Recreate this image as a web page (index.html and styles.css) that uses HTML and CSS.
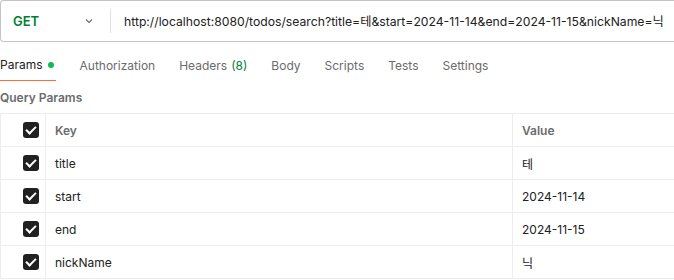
FILE: index.html
```html
<!DOCTYPE html>
<html lang="en">
<head>
  <meta charset="UTF-8">
  <title>GET todos search</title>
  <link rel="stylesheet" href="styles.css">
</head>
<body>
  <div class="url-bar">
    <div class="method">
      <span class="method-name">GET</span>
      <svg class="chevron" width="12" height="12" viewBox="0 0 12 12">
        <path d="M3 4.5 L6 7.5 L9 4.5" fill="none" stroke="#6b6b6b" stroke-width="1.1"/>
      </svg>
    </div>
    <div class="url-text">http://localhost:8080/todos/search?title=테&amp;start=2024-11-14&amp;end=2024-11-15&amp;nickName=닉</div>
  </div>

  <div class="tabs">
    <div class="tab tab-active">Params <span class="dot"></span></div>
    <div class="tab">Authorization</div>
    <div class="tab">Headers <span class="count">(8)</span></div>
    <div class="tab">Body</div>
    <div class="tab">Scripts</div>
    <div class="tab">Tests</div>
    <div class="tab">Settings</div>
  </div>

  <div class="section-title">Query Params</div>

  <div class="params">
    <div class="row head">
      <div class="cell check"><span class="box"></span></div>
      <div class="cell key">Key</div>
      <div class="cell value">Value</div>
    </div>
    <div class="row">
      <div class="cell check"><span class="box"></span></div>
      <div class="cell key">title</div>
      <div class="cell value">테</div>
    </div>
    <div class="row">
      <div class="cell check"><span class="box"></span></div>
      <div class="cell key">start</div>
      <div class="cell value">2024-11-14</div>
    </div>
    <div class="row">
      <div class="cell check"><span class="box"></span></div>
      <div class="cell key">end</div>
      <div class="cell value">2024-11-15</div>
    </div>
    <div class="row">
      <div class="cell check"><span class="box"></span></div>
      <div class="cell key">nickName</div>
      <div class="cell value">닉</div>
    </div>
  </div>
</body>
</html>
```

FILE: styles.css
```css
body {
  margin: 0;
  padding: 0;
  font-family: Inter, "Noto Sans CJK KR", sans-serif;
  font-size: 12px;
  color: #212121;
  background: #fff;
  overflow: hidden;
}

/* request bar */
.url-bar {
  display: flex;
  align-items: center;
  height: 42px;
  border: 1px solid #c4c4c4;
  border-right: none;
  border-radius: 4px 0 0 4px;
  box-sizing: border-box;
}

.method {
  display: flex;
  align-items: center;
  justify-content: space-between;
  width: 110px;
  height: 24px;
  padding: 0 15px 0 12px;
  box-sizing: border-box;
  border-right: 1px solid #e0e0e0;
  font-size: 13px;
}

.method-name {
  color: #007f31;
  font-weight: 600;
}

.url-text {
  padding-left: 13px;
  white-space: nowrap;
  font-size: 12.2px;
}

/* tabs */
.tabs {
  display: flex;
  gap: 24px;
  margin-top: 7px;
  height: 32px;
}

.tab {
  display: flex;
  align-items: center;
  color: #6b6b6b;
  height: 32px;
  box-sizing: border-box;
}

.tab-active {
  color: #212121;
  border-bottom: 1px solid #ff6c37;
  padding-right: 2px;
}

.dot {
  display: inline-block;
  width: 6px;
  height: 6px;
  border-radius: 50%;
  background: #0cbb52;
  margin-left: 5px;
}

.count {
  color: #007f31;
  margin-left: 4px;
}

.section-title {
  margin-top: 6px;
  font-weight: 600;
  color: #6b6b6b;
  height: 26px;
  line-height: 22px;
}

/* params table */
.params {
  border-top: 1px solid #ededed;
}

.row {
  display: flex;
  height: 33px;
  border-bottom: 1px solid #ededed;
  box-sizing: border-box;
}

.cell {
  display: flex;
  align-items: center;
  box-sizing: border-box;
}

.check {
  width: 46px;
  justify-content: flex-end;
  padding-right: 6px;
  border-left: 1px solid #ededed;
  border-right: 1px solid #ededed;
}

.box {
  position: relative;
  width: 16px;
  height: 16px;
  border-radius: 3px;
  background: #212121;
}

.box::after {
  content: "";
  position: absolute;
  left: 5px;
  top: 2px;
  width: 4px;
  height: 8px;
  border: solid #fff;
  border-width: 0 2px 2px 0;
  transform: rotate(45deg);
}

.key {
  width: 467px;
  padding-left: 9px;
  border-right: 1px solid #ededed;
}

.value {
  flex: 1;
  padding-left: 9px;
}

.head .cell {
  color: #6b6b6b;
  font-weight: 600;
}
```
